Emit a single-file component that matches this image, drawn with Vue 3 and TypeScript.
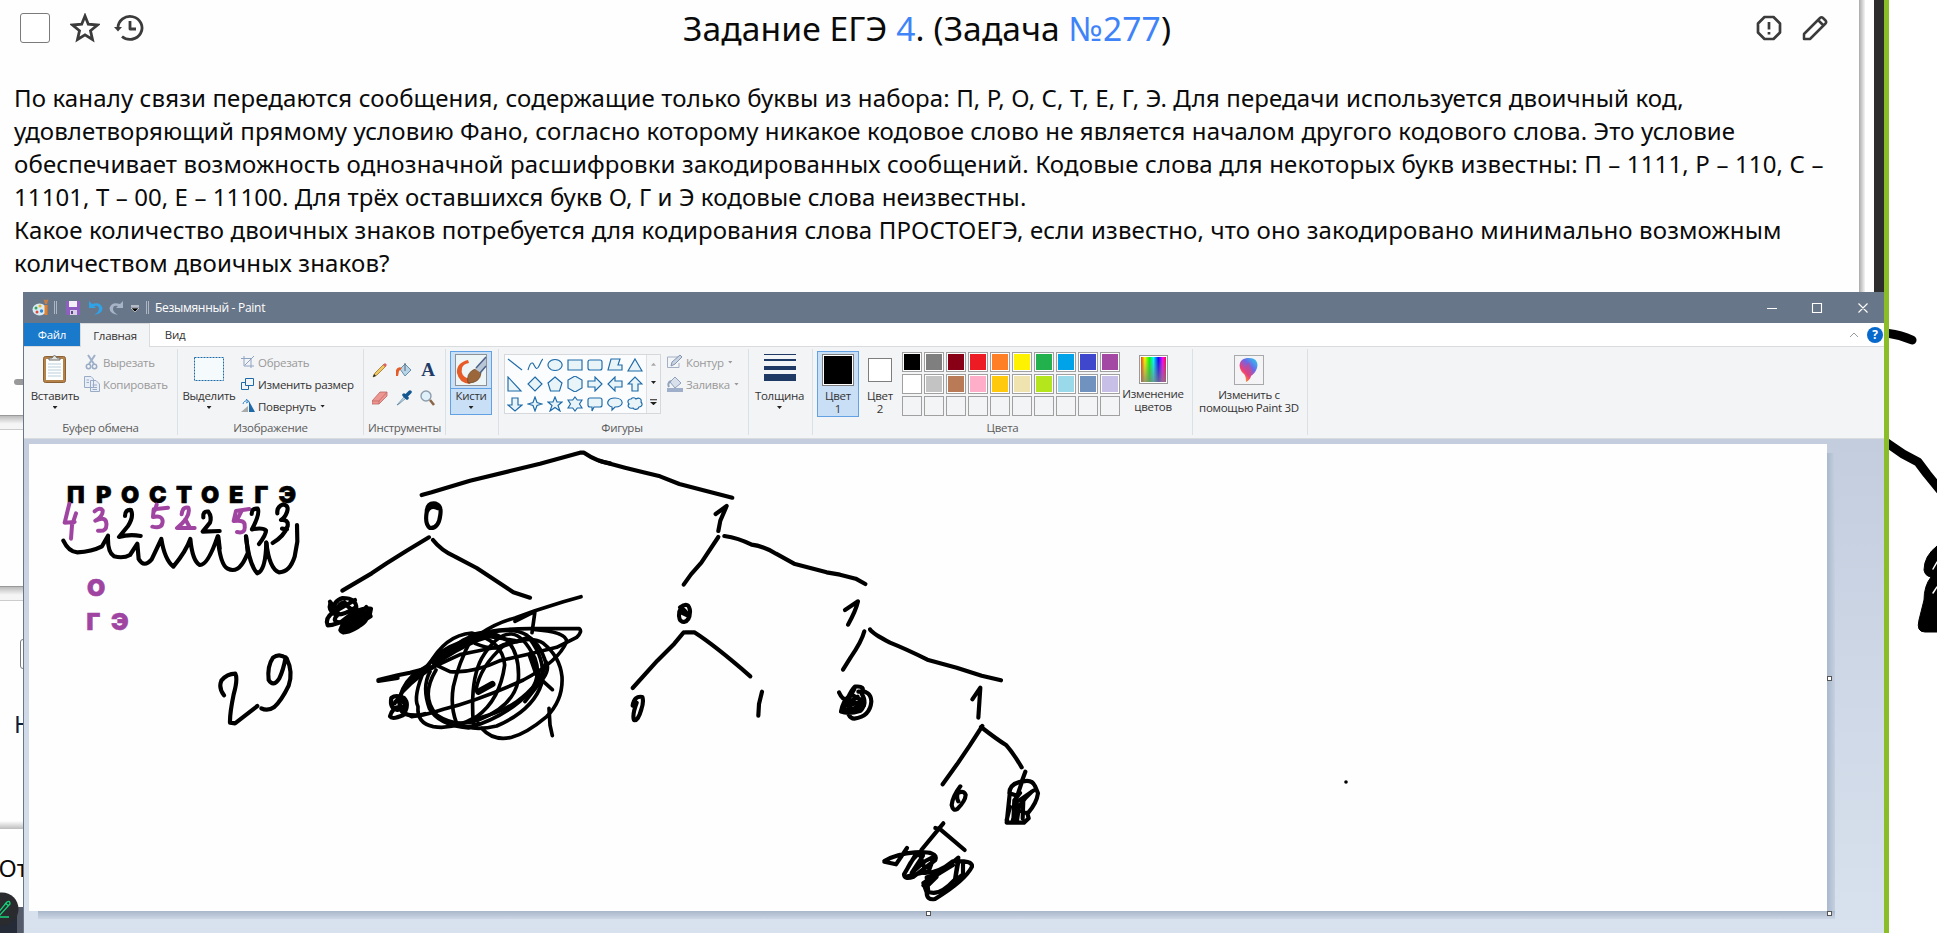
<script setup lang="ts">
interface StrokeSet {
  x: number
  y: number
  color: string
  width: number
  paths: string[]
}

interface Line {
  text: string
  spacing: number
}

const problem: Line[] = [
  { text: 'По каналу связи передаются сообщения, содержащие только буквы из набора: П, Р, О, С, Т, Е, Г, Э. Для передачи используется двоичный код,', spacing: 0.128 },
  { text: 'удовлетворяющий прямому условию Фано, согласно которому никакое кодовое слово не является началом другого кодового слова. Это условие', spacing: 0.12 },
  { text: 'обеспечивает возможность однозначной расшифровки закодированных сообщений. Кодовые слова для некоторых букв известны: П – 1111, Р – 110, С –', spacing: 0.155 },
  { text: '11101, Т – 00, Е – 11100. Для трёх оставшихся букв О, Г и Э кодовые слова неизвестны.', spacing: 0.09 },
  { text: 'Какое количество двоичных знаков потребуется для кодирования слова ПРОСТОЕГЭ, если известно, что оно закодировано минимально возможным', spacing: 0.145 },
  { text: 'количеством двоичных знаков?', spacing: 0.15 },
]

const palette: string[] = [
  '#000000', '#7f7f7f', '#880015', '#ed1c24', '#ff7f27', '#fff200', '#22b14c', '#00a2e8', '#3f48cc', '#a349a4',
  '#ffffff', '#c3c3c3', '#b97a57', '#ffaec9', '#ffc90e', '#efe4b0', '#b5e61d', '#99d9ea', '#7092be', '#c8bfe7',
  '', '', '', '', '', '', '', '', '', '',
]

const shapes: string[] = [
  'M1 2L15 13',
  'M1 13C3 6 5 4 7 8S10 13 12 9S14 4 16 2',
  'M8 2.5a7 5.5 0 1 0 .1 0z',
  'M1 3H15V13H1z',
  'M3 3H13Q15 3 15 5V11Q15 13 13 13H3Q1 13 1 11V5Q1 3 3 3z',
  'M4 2H13L11 8H15V13H1z',
  'M8 2L15 14H1z',
  'M1 1V15H14z',
  'M8 1L15 8L8 15L1 8z',
  'M8 1L15 7L12.5 15H3.5L1 7z',
  'M8 0L15 4V12L8 16L1 12V4z',
  'M1 5H8V1L15 8L8 15V11H1z',
  'M15 5H8V1L1 8L8 15V11H15z',
  'M5 15V8H1L8 1L15 8H11V15z',
  'M5 2V9H1L8 15L15 9H11V2z',
  'M8 1L10 6.5L15 8L10 9.5L8 15L6 9.5L1 8L6 6.5z',
  'M8 1L10 6H15L11 9.5L13 15L8 11.5L3 15L5 9.5L1 6H6z',
  'M8 1L10.3 4H15L12.5 8L15 12H10.3L8 15L5.7 12H1L3.5 8L1 4H5.7z',
  'M3 2H13Q15 2 15 4V9Q15 11 13 11H7L5 15V11H3Q1 11 1 9V4Q1 2 3 2z',
  'M8 2C17 2 18 11 8 11L5 14V11C-2 9 0 2 8 2z',
  'M4 3C6 1 8 2 9 3C12 1 15 3 14 6C16 8 15 11 12 11C11 14 7 14 6 12C2 13 0 10 2 8C0 6 1 3 4 3z',
]

const strokes: StrokeSet[] = [
  {
    x: 0, y: 440, color: '#a044a2', width: 12,
    paths: [
      'M208 191L194 248L224 246M228 220L216 256L213 296',
      'M284 214Q300 200 308 211Q310 228 286 242Q318 228 319 250Q322 276 294 272',
      'M504 203L461 208L459 231Q486 225 488 243Q488 268 457 260M470 194L464 212',
      'M545 223Q548 198 565 203Q574 230 531 264H584M556 238L568 260',
      'M748 207L708 213L701 243Q736 238 734 258Q737 282 711 276M724 214L712 238',
    ],
  },
  {
    x: 0, y: 440, color: '#000', width: 12.5,
    paths: [
      'M375 228Q375 208 393 210Q402 230 384 258L357 291Q388 282 422 288',
      'M610 232Q608 212 625 215Q636 230 630 248L608 275L659 273',
      'M755 222Q755 204 773 206Q781 220 756 268Q790 262 798 272Q798 284 777 312',
      'M832 220Q830 200 849 193Q868 196 861 216Q855 233 843 240Q866 238 863 258Q853 288 818 309M846 266L861 268',
      'M190 302Q206 336 232 337Q275 335 306 319L324 287Q322 337 342 349Q370 356 390 345L412 311L416 357Q432 385 455 358L484 297Q494 359 520 380Q558 334 571 297Q577 362 599 375Q623 377 653 289Q660 374 683 386Q714 402 736 355L744 338L738 289Q747 374 772 400Q797 392 799 308Q808 386 837 397Q869 397 884 350L892 305L891 255',
      'M738 290L745 345M655 290L659 325M799 308L802 350',
      'M672 766Q655 744 664 722Q681 701 706 701Q714 717 701 763Q689 821 690 848L705 850L772 798',
      'M857 652Q850 690 838 715Q820 743 806 720Q801 679 819 653Q838 638 860 655Q880 696 866 737Q845 781 823 801Q803 815 784 805',
    ],
  },
  {
    x: 310, y: 440, color: '#000', width: 12.5,
    paths: [
      'M335 165L365 157L480 122L600 93L690 71L810 38L822 38Q860 64 900 70',
      'M350 218Q350 186 378 191Q395 196 391 224Q386 266 360 264Q344 253 350 217Q359 193 383 204',
      'M357 292L290 332L230 370L185 400L97 452',
      'M369 300Q393 331 435 350L500 384L610 457L660 473',
      'M61 490Q54 510 74 522Q95 529 135 503Q150 508 118 533Q78 556 53 556Q44 534 71 516Q67 484 98 474Q140 474 139 506Q124 517 104 487Q80 490 82 526Q63 545 91 548Q150 497 183 506Q182 532 145 560Q100 587 91 570Q101 536 169 524Q177 547 129 567Q88 579 101 550Q142 533 169 501L182 529L110 574L104 558L161 535',
      'M60 485L75 505M65 520L135 480M98 550L171 528M98 568L158 542M116 535L174 515M100 577L142 559',
      'M205 720L263 706L300 698L370 680M205 723L263 714',
      'M349 680L310 705Q270 745 268 790L282 822Q320 830 345 822M244 774Q258 763 282 774Q300 793 280 825Q247 840 240 829Q246 804 270 800M244 774Q238 805 262 810Q286 808 284 790Q262 770 254 790',
    ],
  },
  {
    x: 400, y: 600, color: '#000', width: 11,
    paths: [
      'M75 205Q110 160 150 140L240 102Q290 68 345 54L405 32L490 5L543 -10M345 64L405 34L396 98',
      'M0 290Q15 245 80 210L180 164Q255 148 310 138L385 112M210 105Q290 85 400 86H538Q548 95 530 112L470 142Q380 165 300 182Q220 220 150 215L110 196Q55 225 8 275',
      'M85 198Q135 105 215 99Q308 122 314 195Q300 300 230 350Q160 390 100 380Q50 370 54 320Q38 290 75 205',
      'M90 215Q65 260 88 325Q115 375 205 384Q320 350 390 275Q425 230 405 175Q370 105 335 102Q290 100 245 175Q210 240 220 370',
      'M108 210Q60 290 110 345Q170 385 235 360Q340 320 355 240Q360 160 320 120L290 105Q245 90 190 120L110 175',
      'M215 115Q175 190 160 260Q150 320 170 370Q220 395 290 378Q400 330 425 250Q440 175 380 105Q340 80 255 101L180 130',
      'M245 385Q280 425 335 412Q380 400 440 350Q490 300 486 230Q480 170 430 130Q400 110 350 125',
      'M400 88Q500 95 500 125Q475 185 370 240Q240 300 130 328Q80 345 35 350L5 335M438 185Q450 205 430 235L375 305M385 110Q420 130 438 190L420 235L457 269',
      'M220 358Q300 340 350 305Q420 255 435 195M228 270Q240 200 310 138M345 122Q310 115 225 105M447 325L450 375L457 407M235 370Q210 390 165 370M225 130Q260 145 290 144Q320 125 370 122',
    ],
  },
  {
    x: 400, y: 600, color: '#000', width: 19,
    paths: ['M105 190Q160 148 235 116L280 102', 'M235 275L277 252', 'M392 165L412 222'],
  },
  {
    x: 600, y: 440, color: '#000', width: 12.5,
    paths: [
      'M0 63L75 83L130 97L180 109L238 132L310 151L397 173',
      'M347 222L380 198L361 242L355 273',
      'M355 291L304 368L273 403L251 434',
      'M373 288Q415 294 455 314Q490 318 528 341L582 371L680 397L720 404L767 416L796 432',
      'M240 502Q268 482 270 515Q269 543 252 546Q233 545 238 515Q246 494 264 527L245 518',
      'M251 577L223 611L172 662L98 744M256 577H283Q344 616 451 709',
      'M98 797Q103 766 127 771Q132 784 124 808Q114 844 102 840Q96 825 110 788M486 755L477 792L475 827',
      'M735 510L774 484Q767 514 744 554M793 574Q785 605 752 652L729 689M810 568Q817 580 870 608Q920 628 982 659L1070 683L1145 707L1203 721',
      'M717 757Q728 781 742 778Q754 750 765 740Q798 736 785 761Q803 789 782 812Q746 824 723 815Q729 780 753 763L791 784L757 810L741 792L773 770M753 796Q790 774 792 797L755 814L730 805L763 747M775 755Q813 750 814 785Q810 830 763 836Q752 836 745 822',
      'M1117 778L1141 743L1138 788L1135 833',
    ],
  },
  {
    x: 820, y: 600, color: '#000', width: 12.5,
    paths: [
      'M487 378L449 437L411 493L368 553M483 381Q532 419 558 435Q580 460 605 502',
      'M421 559Q398 589 395 615Q399 635 412 627Q436 603 437 585Q432 570 413 579Q409 594 415 604M616 515L605 545',
      'M346 684L361 688L434 750M370 670L304 750',
      'M606 545Q635 536 645 558L654 580Q650 609 625 638M606 545Q569 550 568 580L592 587L606 545M569 583L560 668H588M600 579L583 601L580 663M592 600L577 668M623 584L597 620L590 668H612L626 655L622 640L604 634M635 575L610 600L608 655M570 620L560 660M600 600L640 572',
      'M193 783Q231 761 285 757Q357 753 346 780L281 830Q252 840 252 823L289 760L309 767L275 819L316 783L342 770L326 814L263 829M261 744L228 793L193 785M263 804Q280 770 299 761L313 804',
      'M311 819Q353 821 398 784Q459 780 456 800Q435 842 345 897Q320 902 320 877L310 849L360 819L415 773L405 838Q356 891 325 875L320 832L350 826L310 856M429 787V823L405 842L414 791M340 831L399 795M325 855L350 830',
    ],
  },
]
</script>

<template>
  <div class="screen">
    <section class="page">
      <header class="page-head">
        <span class="check"></span>
        <svg class="head-icon star" width="30" height="30" viewBox="0 0 30 30"><path d="M15 3L18.300 11.200L27.500 12L20.500 17.700L22.500 26.500L15 21.800L7.500 26.500L9.500 17.700L2.500 12L11.700 11.200z" /></svg>
        <svg class="head-icon history" width="30" height="30" viewBox="0 0 30 30"><path d="M4 15A12 11.500 0 1 1 8 23.500M16 8V16H22" /><path class="solid" d="M0 14H8L4 18.500z" /></svg>
        <h1>Задание ЕГЭ <a>4</a>. (Задача <a>№277</a>)</h1>
        <svg class="head-icon alert" width="26" height="26" viewBox="0 0 26 26"><path d="M8.500 2H17.500L24 8.500V17.500L17.500 24H8.500L2 17.500V8.500zM13 7V14.500M13 17V19.500" /></svg>
        <svg class="head-icon pencil" width="26" height="26" viewBox="0 0 26 26"><path d="M2 24V19L18 3Q19.500 1.500 21 3L23.500 5.500Q25 7 23.500 8.500L8 24zM16 5L21.500 10.500" /></svg>
      </header>
      <div class="problem">
        <div v-for="(line, i) in problem" :key="i" class="line" :style="{ letterSpacing: line.spacing + 'px' }">{{ line.text }}</div>
      </div>
      <aside class="behind">
        <span class="pill"></span>
        <span class="gap gap-a"></span>
        <span class="gap gap-b"></span>
        <span class="check check-b"></span>
        <span class="letter-h">Н</span>
        <span class="gap gap-c"></span>
        <span class="letter-o">От</span>
        <span class="dark-foot"></span>
        <svg class="round" width="36" height="36" viewBox="0 0 36 36"><circle cx="18" cy="17" r="16.500" fill="#292b2e" /><path d="M13 22L23 10Q26 8 26 12L16 23L11 24zM21 11L25 14M14 25H25" fill="none" stroke="#16d67a" stroke-width="1.300" /></svg>
      </aside>
    </section>
    <div class="edge-shadow"></div>
    <div class="edge-space"></div>
    <div class="edge-dark"></div>
    <div class="edge-green"></div>
    <svg class="far" width="48" height="933" viewBox="1889 0 48 933">
      <path d="M1884 333Q1899 334 1912 340" />
      <path d="M1884 441L1903 454L1918 462L1927 474L1940 490" />
      <path class="blob" d="M1937 546Q1924 556 1924 570Q1925 576 1931 577Q1924 586 1924 600L1919 620Q1916 632 1925 632H1937z" />
      <path class="nick" d="M1933 569L1937 562M1933 593L1937 587" />
    </svg>

    <main class="window">
      <div class="titlebar">
        <svg class="t-palette" width="18" height="18" viewBox="0 0 18 18"><ellipse cx="7.500" cy="10.500" rx="7" ry="6" fill="#d6ebf5" /><circle cx="4" cy="9" r="1.500" fill="#35a35a" /><circle cx="8" cy="7" r="1.500" fill="#e8b532" /><circle cx="5" cy="13" r="1.500" fill="#dc4c3a" /><circle cx="9.500" cy="12" r="1.700" fill="#3488d0" /><path d="M14 6V16" stroke="#e6812b" stroke-width="3" /><path d="M11.500 0Q14 2 16.500 0L15 5H13z" fill="#c67e46" /></svg>
        <i class="t-sep"></i>
        <svg class="t-save" width="14" height="14" viewBox="0 0 14 14"><path d="M0 0H14V14H1L0 13z" fill="#8e5fc0" /><path d="M3 0H11V6H3z" fill="#f4f0fa" /><path d="M4 9H11V14H4z" fill="#d8d0e4" /><path d="M5 10H7V13H5z" fill="#624385" /></svg>
        <svg class="t-undo" width="14" height="14" viewBox="0 0 14 14"><path d="M0 0V7H7L5 5Q10 3.500 10 8Q10 11 5 14Q13.500 12.500 13.500 7Q11.500 .5 3 3z" fill="#2fa3e8" /></svg>
        <svg class="t-redo" width="14" height="14" viewBox="0 0 14 14"><path d="M14 0V7H7L9 5Q4 3.500 4 8Q4 11 9 14Q.5 12.500 .5 7Q2.500 .5 11 3z" fill="#a7b3c6" /></svg>
        <svg class="t-more" width="8" height="8" viewBox="0 0 8 8"><path d="M0 1H8" stroke="#fff" stroke-width="1" /><path d="M0 3H8L4 7z" fill="#000" stroke="#fff" stroke-width=".6" /></svg>
        <i class="t-sep second"></i>
        <span class="t-name">Безымянный - Paint</span>
        <svg class="t-controls" width="112" height="20" viewBox="0 0 112 20"><path d="M5 10.500H15M50.500 5.500H59.500V14.500H50.500zM96.500 5.500L105.500 14.500M105.500 5.500L96.500 14.500" /></svg>
      </div>

      <nav class="tabs">
        <span class="tab file">Файл</span>
        <span class="tab active">Главная</span>
        <span class="tab">Вид</span>
        <svg class="tab-caret" width="10" height="6" viewBox="0 0 10 6"><path d="M1 5L5 1L9 5" /></svg>
        <span class="help">?</span>
      </nav>

      <div class="ribbon">
        <section class="group g-clip">
          <div class="body">
            <div class="big">
              <svg width="26" height="32" viewBox="0 0 26 32"><rect x="1.500" y="3.500" width="22" height="26" rx="2" fill="#b5824a" stroke="#8b6134" /><rect x="4" y="6" width="17" height="21" fill="#fdfefe" /><path d="M6 11H19M6 14H19M6 17H19M6 20H19M6 23H19" stroke="#b9cfdc" /><path d="M7 7V5H10Q12.500 0 15 5H18V7z" fill="#e2e2df" stroke="#6e6e6e" /></svg>
              <span>Вставить</span><i class="arr"></i>
            </div>
            <div class="list">
              <div class="item off"><svg width="16" height="16" viewBox="0 0 16 16"><path d="M4 1L10 10M11 1L5 10" stroke="#9fb0c9" stroke-width="2" /><circle cx="4.500" cy="12.500" r="2.200" fill="none" stroke="#9aabc5" stroke-width="1.500" /><circle cx="10.500" cy="12.500" r="2.200" fill="none" stroke="#9aabc5" stroke-width="1.500" /></svg>Вырезать</div>
              <div class="item off"><svg width="16" height="16" viewBox="0 0 16 16"><path d="M.5.500H7L9.500 3V11.500H.5zM6.500 4.500H12L15.500 8V15.500H6.500z" fill="#e8eef7" stroke="#9aabc5" /><path d="M8.500 9H13M8.500 11.500H13M8.500 13.500H13M2.500 4H5M2.500 6.500H5" stroke="#9aabc5" /></svg>Копировать</div>
            </div>
          </div>
          <footer>Буфер обмена</footer>
        </section>

        <section class="group g-image">
          <div class="body">
            <div class="big">
              <svg width="32" height="32" viewBox="0 0 32 32"><rect x="1.500" y="4.500" width="29" height="23" fill="#f5fafc" stroke="#1e6aa8" stroke-dasharray="2 1" /></svg>
              <span>Выделить</span><i class="arr"></i>
            </div>
            <div class="list">
              <div class="item off"><svg width="14" height="14" viewBox="0 0 14 14"><path d="M3 1V11H13M0 3.500H10V13M4 10L13 1" fill="none" stroke="#8ea3c2" /></svg>Обрезать</div>
              <div class="item"><svg width="14" height="14" viewBox="0 0 14 14"><path d="M4.500 1.500H12.500V8.500H4.500zM4 5.500H.5V12.500H7.500V9" fill="none" stroke="#1e6aa8" /></svg>Изменить размер</div>
              <div class="item"><svg width="14" height="14" viewBox="0 0 14 14"><path d="M0 13L7 7V13z" fill="#aaa" /><path d="M8 13V2L14 13z" fill="#1e6aa8" /><path d="M2 5Q3 1 7 2M5 0L8 2.500L5 4" fill="none" stroke="#2c82c8" /></svg>Повернуть<i class="arr"></i></div>
            </div>
          </div>
          <footer>Изображение</footer>
        </section>

        <section class="group g-tools">
          <div class="tools">
            <svg width="16" height="16" viewBox="0 0 16 16"><path d="M1 15L3 11L12 2L14 4L5 13z" fill="#f0c860" stroke="#9a7232" stroke-width=".8" /><path d="M11 3L13 1L15 3L13 5z" fill="#df6060" /><path d="M1 15L2 12L4 14z" fill="#222" /></svg>
            <svg width="16" height="16" viewBox="0 0 16 16"><path d="M4 7L9 2L15 8L9 14z" fill="#b8d5e8" stroke="#6a8da8" /><path d="M9 9V1" stroke="#567" /><path d="M0 14V8Q2 4 6 6L3 9L2 14z" fill="#e65c28" /></svg>
            <b>A</b>
            <svg width="16" height="16" viewBox="0 0 16 16"><path d="M0 11L8 2H15V6L7 14H0z" fill="#ee9691" stroke="#bb6762" stroke-width=".8" /><path d="M0 11H7V14M7 11L15 2" stroke="#ba6662" stroke-width=".7" fill="none" /></svg>
            <svg width="16" height="16" viewBox="0 0 16 16"><path d="M1 15L9 6L10 8L3 14z" fill="#d8e8f3" stroke="#58839d" stroke-width=".8" /><path d="M8 5L11 8M10 6L14 2" stroke="#14568f" stroke-width="3.500" stroke-linecap="round" /></svg>
            <svg width="16" height="16" viewBox="0 0 16 16"><circle cx="6" cy="6" r="5" fill="#dff0fa" stroke="#8e9dab" stroke-width="1.400" /><path d="M10 10L14 15" stroke="#8b6748" stroke-width="2.600" /></svg>
          </div>
          <footer>Инструменты</footer>
        </section>

        <section class="group g-brush">
          <div class="brush-btn">
            <svg width="32" height="32" viewBox="0 0 32 32"><rect x=".5" y=".5" width="31" height="31" fill="#eef5f6" stroke="#8e9294" /><path d="M13 6Q1 9 2 19Q4 29 15 30Q17 27 14 25Q5 22 7 14Q8 10 14 9z" fill="#e75b27" /><path d="M13 29Q11 20 18 16Q24 13 26 19Q25 29 13 29z" fill="#9b673a" stroke="#674325" stroke-width=".7" /><path d="M20 15L31 3V13L26 19z" fill="#b9c6d6" /><path d="M21 14L31 3M25 19L31 12" stroke="#4c6388" stroke-width="1.500" /></svg>
            <span>Кисти</span><i class="arr"></i>
          </div>
        </section>

        <section class="group g-shapes">
          <div class="body">
            <div class="gallery">
              <div class="shape-grid">
                <svg v-for="(d, i) in shapes" :key="i" width="16" height="16" viewBox="0 0 16 16"><path :d="d" /></svg>
              </div>
              <div class="scroll"><i class="up"></i><i class="arr"></i><i class="arr last"></i></div>
            </div>
            <div class="list">
              <div class="item off"><svg width="16" height="16" viewBox="0 0 16 16"><path d="M11 3H.5V13.500H12V9" fill="none" stroke="#a2afc4" /><path d="M4 12L5 8L13 1L15 3L8 10z" fill="#c9d3e2" stroke="#8496b2" /></svg>Контур<i class="arr"></i></div>
              <div class="item off"><svg width="16" height="16" viewBox="0 0 16 16"><path d="M3 6L8 1L14 7L8 12z" fill="#d9e0eb" stroke="#8fa1bb" /><path d="M0 12H16V16H0z" fill="#9fafc9" /><path d="M2 11Q0 7 4 5" fill="none" stroke="#8fa1bb" stroke-width="2" /></svg>Заливка<i class="arr"></i></div>
            </div>
          </div>
          <footer>Фигуры</footer>
        </section>

        <section class="group g-size">
          <div class="big">
            <svg width="32" height="32" viewBox="0 0 32 32"><path d="M0 1H32V2H0zM0 6H32V8H0zM0 13H32V17H0zM0 21H32V28H0z" fill="#1e3a64" /></svg>
            <span>Толщина</span><i class="arr"></i>
          </div>
        </section>

        <section class="group g-colors">
          <div class="body">
            <div class="color-btn chosen"><i class="chip black"></i><span>Цвет<br>1</span></div>
            <div class="color-btn"><i class="chip white"></i><span>Цвет<br>2</span></div>
            <div class="palette">
              <i v-for="(c, i) in palette" :key="i" :style="{ background: c || '#f3f4f6' }" :class="{ empty: !c }"></i>
            </div>
            <div class="wide edit"><i class="rainbow"></i><span>Изменение<br>цветов</span></div>
          </div>
          <footer>Цвета</footer>
        </section>

        <section class="group g-3d">
          <div class="wide">
            <svg width="30" height="30" viewBox="0 0 30 30">
              <defs><linearGradient id="drop" x1="1" y1="0" x2=".2" y2="1"><stop offset="0" stop-color="#22d9ee" /><stop offset=".4" stop-color="#6a67e8" /><stop offset=".7" stop-color="#ed3e79" /><stop offset="1" stop-color="#f4b51e" /></linearGradient></defs>
              <rect x=".5" y=".5" width="29" height="29" fill="#f4f4f6" stroke="#a7a9ab" /><path d="M15 3C3 3 4 14 10 19Q12 21 12 27Q16 25 17 21C25 16 27 3 15 3z" fill="url(#drop)" /><path d="M15 7Q9 13 14 22L18 16z" fill="#d34684" opacity=".55" />
            </svg>
            <span>Изменить с<br>помощью Paint 3D</span>
          </div>
        </section>
      </div>

      <div class="workspace">
        <div class="sheet">
          <svg width="1798" height="467" viewBox="29 444 1798 467">
            <g class="letters">
              <text x="67 96 121 149 176 201 229 254.500 278.500" y="503">ПРОСТОЕГЭ</text>
              <text class="violet" x="87" y="596">О</text>
              <text class="violet" x="86.500 111" y="630">ГЭ</text>
            </g>
            <g v-for="(s, i) in strokes" :key="i" class="ink" :transform="`translate(${s.x} ${s.y}) scale(.33333)`" :stroke="s.color" :stroke-width="s.width">
              <path v-for="(d, j) in s.paths" :key="j" :d="d" />
            </g>
            <circle cx="1346" cy="782" r="1.800" />
          </svg>
          <i class="handle south"></i><i class="handle east"></i><i class="handle corner"></i>
        </div>
      </div>
    </main>
  </div>
</template>

<style>
html, body { margin: 0; overflow: hidden; background: #fff; }
</style>

<style scoped>
* { box-sizing: border-box; }
.screen { position: relative; display: flex; width: 1937px; height: 933px; overflow: hidden; background: #fff; color: #0a0a0a; font-family: "Noto Sans", "Open Sans", sans-serif; }
.page { position: relative; flex: none; width: 1859px; height: 933px; background: #fefefe; }
.edge-shadow { flex: none; width: 6px; background: linear-gradient(90deg, #aaa, #f3f3f3); }
.edge-space { flex: none; width: 9px; background: #fefefe; }
.edge-dark { flex: none; width: 10px; background: #2d2d2d; }
.edge-green { flex: none; width: 5px; background: #8abd27; }
.far { flex: none; }
.far path { fill: none; stroke: #000; stroke-width: 9; stroke-linecap: round; stroke-linejoin: round; }
.far .blob { fill: #000; stroke-width: 1; }
.far .nick { stroke: #fff; stroke-width: 1.5; }

.page-head { display: flex; align-items: center; height: 56px; padding-left: 20px; }
.check { flex: none; width: 30px; height: 30px; border: 1.5px solid #7b7b7b; border-radius: 3px; background: #fff; }
.head-icon { flex: none; fill: none; stroke: #3b3b3b; stroke-width: 2.8; stroke-linejoin: round; }
.star { margin-left: 20px; stroke-linejoin: miter; }
.history { margin-left: 14px; stroke-width: 2.8; }
.history .solid { fill: #3b3b3b; stroke: none; }
h1 { flex: none; width: 493px; margin: 0 0 0 539px; font-size: 33.6px; font-weight: 400; line-height: 56px; letter-spacing: .1px; white-space: nowrap; }
h1 a { color: #3f83f8; }
.alert { margin-left: 580px; stroke-width: 2.7; }
.pencil { margin-left: 20px; stroke-width: 2.5; }
.problem { padding: 25px 0 0 14px; font-size: 24px; line-height: 33px; }
.line { width: max-content; white-space: nowrap; }

.behind > * { position: absolute; }
.pill { left: 14px; top: 379px; width: 30px; height: 6px; border-radius: 3px; background: #999; }
.gap { left: 0; width: 30px; height: 15px; border-top: 1px solid #999; border-bottom: 1px solid #ccc; background: linear-gradient(#bbb, #f5f5f5 60%); }
.gap-a { top: 415px; }
.gap-b { top: 586px; }
.gap-c { top: 821px; height: 8px; border: 0; background: linear-gradient(#fdfdfd, #bdbdbd); }
.check-b { left: 20px; top: 639px; }
.letter-h { left: 14px; top: 707px; font-size: 24px; line-height: 33px; color: #0c1f3c; }
.letter-o { left: -1.5px; top: 852px; font-size: 24px; line-height: 32px; }
.dark-foot { left: 0; top: 907px; width: 24px; height: 26px; background: linear-gradient(90deg, #252c38 17px, #555b69 17px); }
.round { left: -16px; top: 892px; }

.window { position: absolute; left: 23px; top: 292px; width: 1861px; height: 641px; border-left: 1px solid #68768a; font-family: "Open Sans", "Noto Sans", sans-serif; font-size: 11.5px; letter-spacing: -.28px; color: #333; }
.titlebar { display: flex; align-items: center; height: 31px; padding-left: 8px; background: #687689; color: #fff; }
.titlebar svg, .titlebar i, .titlebar span { flex: none; }
.t-sep { width: 3px; height: 13px; margin-left: 4px; border: solid #adb6c2; border-width: 0 1px; }
.t-save { margin-left: 9px; }
.t-undo { margin-left: 9px; }
.t-redo { margin-left: 6px; }
.t-more { margin: 2px 0 0 8px; }
.t-sep.second { margin-left: 7px; }
.t-name { margin-left: 6px; font-size: 12px; }
.t-controls { margin: 0 10px 0 auto; fill: none; stroke: #fff; stroke-width: 1.1; }
.tabs { display: flex; align-items: center; height: 24px; border-bottom: 1px solid #dadbdc; background: #fff; }
.tab { display: flex; align-items: center; justify-content: center; width: 50px; height: 24px; }
.tab.file { width: 56px; height: 23px; align-self: flex-start; background: #1979ca; color: #fff; }
.tab.active { width: 70px; border: solid #dadbdc; border-width: 1px 1px 0; background: #f3f4f6; }
.tab-caret { margin-left: auto; fill: none; stroke: #999; }
.help { display: flex; align-items: center; justify-content: center; width: 16px; height: 16px; margin: 0 1px 0 8px; border-radius: 50%; background: #0769cc; color: #fff; font-size: 12px; font-weight: 700; }

.ribbon { display: flex; height: 92px; padding: 2px 0 3px; border-bottom: 1px solid #dadbdc; background: #f3f4f6; }
.group { position: relative; display: flex; flex: none; flex-direction: column; border-right: 1px solid #dcdfe3; }
.group footer { margin-top: auto; height: 14px; line-height: 14px; text-align: center; color: #5b5b5b; }
.body { display: flex; height: 70px; }
.g-clip { width: 154px; }
.g-image { width: 186px; }
.g-tools { width: 82px; }
.g-brush { width: 53px; }
.g-shapes { width: 250px; }
.g-shapes footer { padding-right: 3px; }
.g-size { width: 64px; }
.g-colors { width: 380px; }
.g-3d { width: 115px; }
.big { display: flex; flex-direction: column; align-items: center; width: 60px; padding-top: 4px; }
.big span { height: 16px; margin-top: 3px; line-height: 16px; }
.arr { width: 5px; height: 3px; background: #222; clip-path: polygon(0 0, 100% 0, 50% 100%); }
.big .arr, .brush-btn .arr { margin-top: 2px; }
.list { display: flex; flex-direction: column; padding-top: 2px; }
.item { display: flex; align-items: center; height: 22px; gap: 3px; white-space: nowrap; }
.item.off { color: #999; }
.item .arr { margin-left: 1px; }
.item.off .arr { background: #999; }
.g-clip .big { width: 62px; }
.g-clip .list { margin-left: -2px; }
.g-image .big { width: 62px; }
.g-image .list { margin-left: 1px; }
.g-tools .tools { display: grid; grid-template-columns: repeat(3, 24px); grid-auto-rows: 28px; place-items: center; padding: 7px 0 0 4px; }
.tools b { color: #1e3c67; font: 700 19px/20px "Liberation Serif", serif; }
.g-brush { padding: 2px 0 0 4px; }
.brush-btn { display: flex; flex-direction: column; align-items: center; width: 42px; height: 64px; padding-top: 2px; border: 1px solid #62a2e4; background: linear-gradient(#c9e0f7 36px, #62a2e4 36px, #62a2e4 37px, #c9dff6 37px); }
.brush-btn span { height: 16px; margin-top: 2px; line-height: 16px; }
.g-shapes .body { padding: 5px 0 0 5px; height: 68px; }
.gallery { display: flex; width: 157px; height: 60px; border: 1px solid #d6d8dc; background: #fbfcfd; }
.shape-grid { display: grid; flex: none; grid-template-columns: repeat(7, 20px); grid-auto-rows: 19.6px; width: 141px; place-items: center; }
.shape-grid path { fill: #e9f4f8; stroke: #1e6aa8; stroke-width: 1.15; }
.shape-grid svg:nth-child(-n+2) path { fill: none; }
.scroll { display: flex; flex: none; flex-direction: column; align-items: center; justify-content: space-around; width: 14px; border-left: 1px solid #dcdfe3; background: #f5f6f8; }
.scroll .up { width: 5px; height: 3px; background: #aaa; clip-path: polygon(0 100%, 100% 100%, 50% 0); }
.scroll .last { height: 6px; width: 7px; clip-path: polygon(0 0, 100% 0, 100% 17%, 0 17%, 0 45%, 100% 45%, 50% 100%, 0 45%); }
.g-shapes .list { margin: -3px 0 0 6px; padding: 0; }
.g-size .big { width: 61px; }
.g-colors .body { padding: 2px 0 0 4px; }
.color-btn { display: flex; flex: none; flex-direction: column; align-items: center; width: 42px; height: 66px; padding-top: 2px; border: 1px solid transparent; line-height: 13px; text-align: center; }
.color-btn.chosen { border-color: #62a2e4; background: #c9dff6; }
.color-btn span, .wide span { margin-top: 3px; line-height: 13px; }
.chip { flex: none; border: 1px solid #7e7e7e; box-shadow: inset 0 0 0 1px #fff; }
.chip.black { width: 32px; height: 32px; background: #000; }
.chip.white { width: 24px; height: 24px; margin: 4px 0; background: #fff; }
.palette { display: grid; flex: none; grid-template-columns: repeat(10, 20px); grid-auto-rows: 20px; gap: 2px; margin: 1px 0 0 1px; }
.palette i { border: 1px solid #a0a0a0; box-shadow: inset 0 0 0 1px #fff; }
.palette .empty { box-shadow: none; }
.wide { display: flex; flex-direction: column; align-items: center; padding-top: 6px; text-align: center; white-space: nowrap; }
.g-3d .wide { padding-right: 2px; }
.edit { width: 66px; padding-top: 4px; }
.rainbow { width: 29px; height: 29px; border: 1px solid #999; box-shadow: inset 0 0 0 1px #fff; background: linear-gradient(transparent, rgba(128,128,128,.8)), linear-gradient(90deg, red, #ff0 18%, #0f0 35%, #0ff 50%, #00f 68%, #f0f 84%, red); }

.workspace { height: 494px; padding: 5px 0 0 5px; background: linear-gradient(#c4cdde, #d8e2ee); }
.sheet { position: relative; width: 1798px; height: 467px; background: #fefefe; }
.sheet::before, .sheet::after { position: absolute; content: ""; }
.sheet::before { left: 9px; right: -8px; top: 467px; height: 8px; background: linear-gradient(#a9b7ca, #ccd6e5); }
.sheet::after { left: 1798px; top: 9px; width: 8px; height: 458px; background: linear-gradient(90deg, #a9b8cc, #c5d0e0); }
.sheet svg { display: block; }
.letters text { font-family: Inter, "Noto Sans", sans-serif; font-size: 23.5px; font-weight: 900; letter-spacing: 0; fill: #000; stroke: #000; stroke-width: .6; }
.letters .violet { fill: #a044a2; stroke: #a044a2; }
.ink { fill: none; stroke-linecap: round; stroke-linejoin: round; }
.handle { position: absolute; z-index: 2; width: 5px; height: 5px; border: 1px solid #555; background: #fff; }
.south { left: 897px; top: 467px; }
.east { left: 1798px; top: 232px; }
.corner { left: 1798px; top: 467px; }
</style>
